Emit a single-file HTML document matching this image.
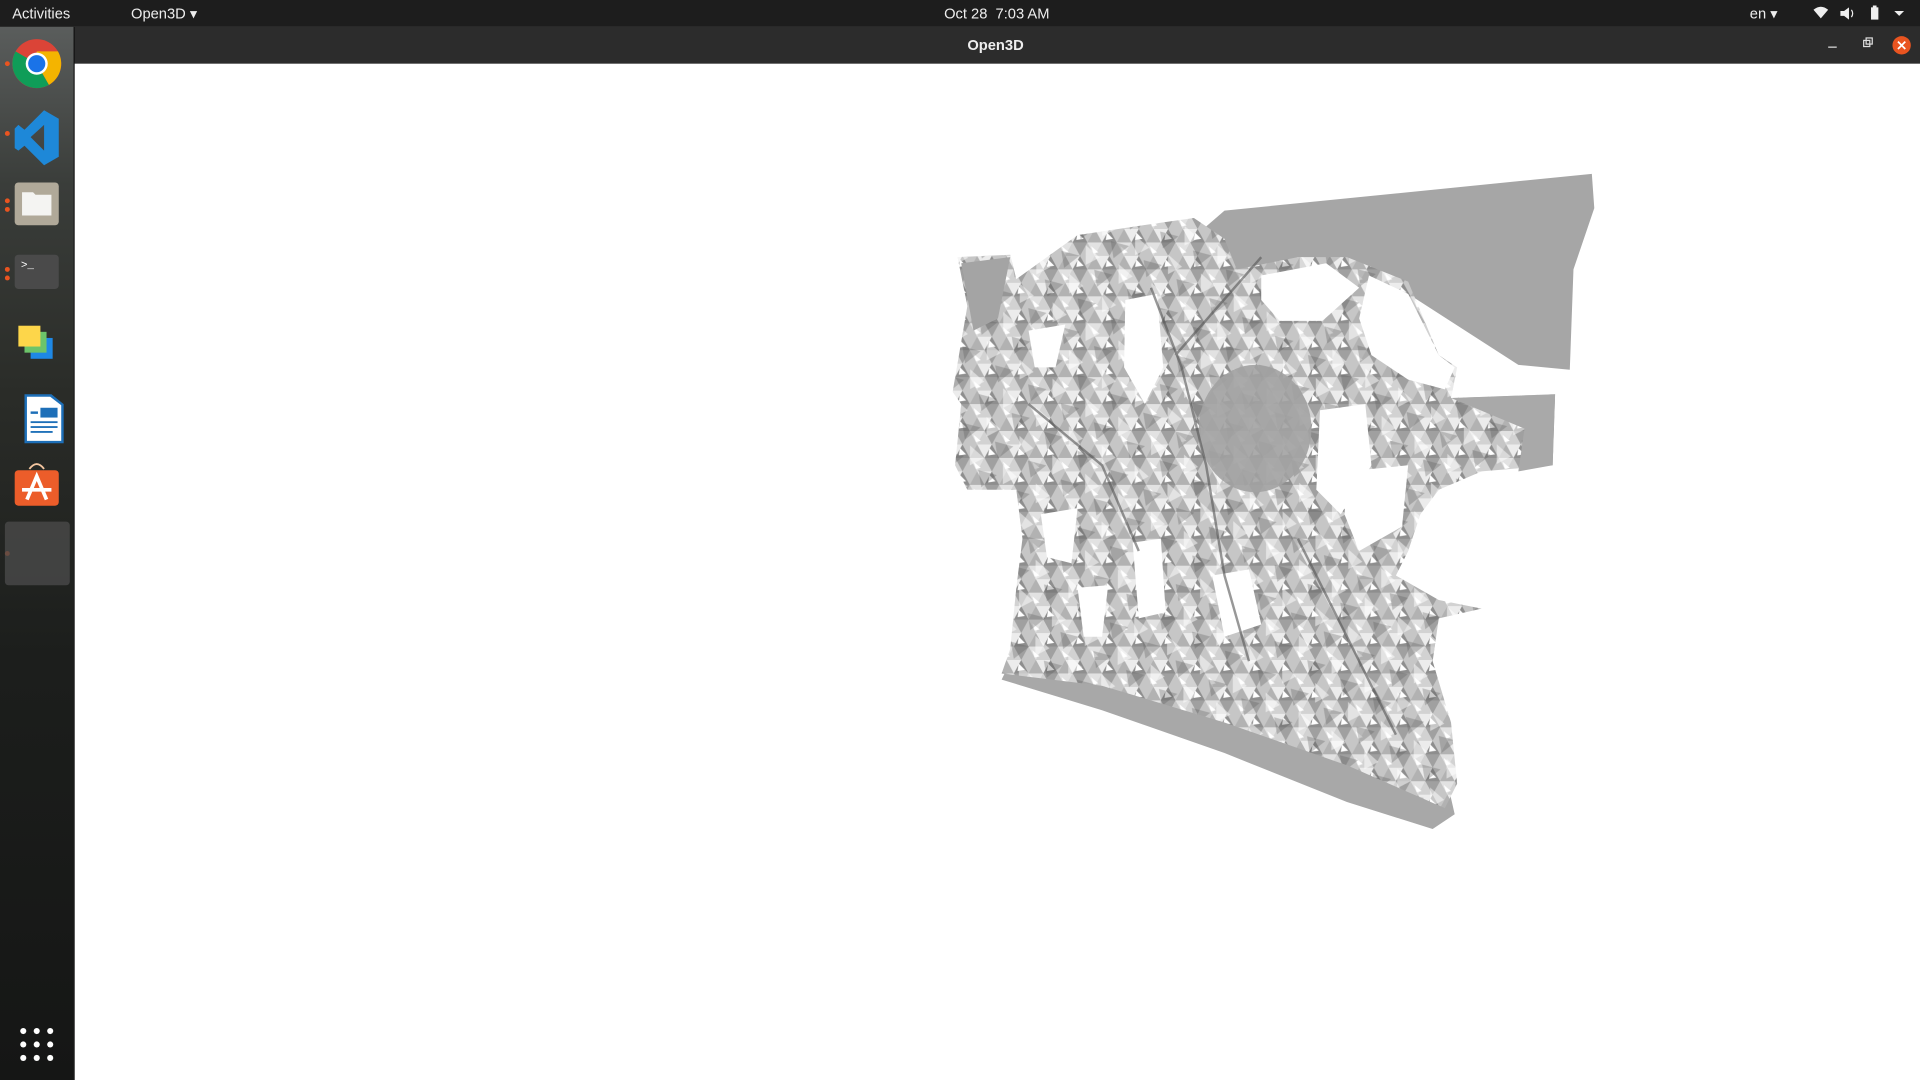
<!DOCTYPE html>
<html><head><meta charset="utf-8"><style>
html,body{margin:0;padding:0;width:1920px;height:1080px;overflow:hidden;background:#fff;}
#s{position:absolute;left:0;top:0;width:1568px;height:882px;transform:scale(1.22449);transform-origin:0 0;font-family:"Liberation Sans",sans-serif;}
.top{position:absolute;left:0;top:0;width:1568px;height:22px;background:#1d1d1d;color:#eee;font-size:12px;}
.top span{position:absolute;top:4px;}
.title{position:absolute;left:60px;top:22px;width:1508px;height:30px;background:#2c2c2c;color:#eee;font-size:12px;font-weight:bold;}
.dock{position:absolute;left:0;top:22px;width:60px;height:860px;background:linear-gradient(180deg,#5a5d5c 0%,#3a3d3a 15%,#2a2c28 35%,#1c1e1c 60%,#151615 100%);border-right:1px solid #111;}
.dot{position:absolute;width:4px;height:4px;border-radius:2px;background:#e95420;left:4px;}
</style></head><body><div id="s">
<div class="top"><span style="left:10px">Activities</span><span style="left:107px">Open3D ▾</span><span style="left:771px">Oct 28&nbsp; 7:03 AM</span><span style="left:1429px">en ▾</span>
<svg style="position:absolute;left:1480px;top:4px" width="80" height="14"><path d="M1 4 Q7 -1 13 4 L7 11Z" fill="#eee"/><path d="M23 5h3l4-3v10l-4-3h-3z" fill="#eee"/><path d="M32 4q2 3 0 6" stroke="#eee" fill="none"/><rect x="48" y="2" width="6" height="10" fill="#eee"/><rect x="49.5" y="0.5" width="3" height="2" fill="#eee"/><path d="M67 5h8l-4 4z" fill="#eee"/></svg></div>
<div class="title"><span style="position:absolute;left:730px;top:8px">Open3D</span>
<svg style="position:absolute;left:1420px;top:6px" width="90" height="18"><rect x="13" y="10" width="7" height="1" fill="#ddd"/><rect x="42" y="5" width="5" height="5" fill="none" stroke="#ddd"/><rect x="44" y="3" width="5" height="5" fill="none" stroke="#ddd"/><circle cx="73" cy="9" r="7.5" fill="#e95420"/><path d="M70 6l6 6M76 6l-6 6" stroke="#fff" stroke-width="1.4"/></svg></div>
<div class="dock">
<div class="dot" style="top:28px"></div><div class="dot" style="top:85px"></div><div class="dot" style="top:140px"></div><div class="dot" style="top:147px"></div><div class="dot" style="top:196px"></div><div class="dot" style="top:203px"></div><div class="dot" style="top:428px"></div>
<svg style="position:absolute;left:0;top:0" width="60" height="860">
<g transform="translate(30,30)"><circle r="20" fill="#db4437"/><path d="M0 0 L-17.3 -10 A20 20 0 0 0 10 17.3Z" fill="#0f9d58"/><path d="M0 0 L10 17.3 A20 20 0 0 0 17.3 -10 L0 -10Z" fill="#f4b400"/><circle r="9" fill="#fff"/><circle r="7" fill="#1a73e8"/></g>
<path d="M36 68 L48 75 V106 L36 113 L20 97 L15 101 L12 99 V83 L15 80 L20 84Z M36 80 L25 90 L36 101Z" fill="#1e88d8" fill-rule="evenodd"/>
<rect x="12" y="127" width="36" height="35" rx="3" fill="#b0a999"/><path d="M18 135h9l2 2h13v17h-24z" fill="#f4f4f2"/>
<rect x="12" y="186" width="36" height="28" rx="3" fill="#4a4a4a"/><text x="17" y="197" fill="#fff" font-size="9" font-family="Liberation Mono">&gt;_</text>
<rect x="25" y="254" width="18" height="17" fill="#1e88e5"/><rect x="20" y="249" width="18" height="17" fill="#6cc46a"/><rect x="15" y="244" width="18" height="17" fill="#fdd64a"/>
<path d="M20 300h22l10 8v32h-32z" fill="#1d6fb8"/><path d="M22 302h19l9 7v29h-28z" fill="#fff"/><rect x="25" y="314" width="6" height="2" fill="#1d6fb8"/><rect x="33" y="311" width="14" height="8" fill="#1d6fb8"/><rect x="25" y="322" width="22" height="1.5" fill="#1d6fb8"/><rect x="25" y="326" width="22" height="1.5" fill="#1d6fb8"/><rect x="25" y="330" width="18" height="1.5" fill="#1d6fb8"/>
<path d="M24 361q6 -8 12 0" stroke="#f4c6a0" fill="none" stroke-width="1.5"/><rect x="12" y="362" width="36" height="29" rx="3" fill="#ec5d2a"/><path d="M22 386l8 -19l8 19M18 378h24" stroke="#fff" stroke-width="3" fill="none"/>
<rect x="4" y="404" width="53" height="52" rx="3" fill="#4a4a4a" opacity="0.8"/>
<g fill="#fff"><circle cx="19" cy="820" r="2.5"/><circle cx="30" cy="820" r="2.5"/><circle cx="41" cy="820" r="2.5"/><circle cx="19" cy="831" r="2.5"/><circle cx="30" cy="831" r="2.5"/><circle cx="41" cy="831" r="2.5"/><circle cx="19" cy="842" r="2.5"/><circle cx="30" cy="842" r="2.5"/><circle cx="41" cy="842" r="2.5"/></g>
</svg></div>
<svg style="position:absolute;left:0;top:0" width="1568" height="882">
<defs><pattern id="m" width="24" height="22" patternUnits="userSpaceOnUse">
<rect width="24" height="22" fill="#c6c6c6"/><path d="M0 0L12 0L6 11Z" fill="#e2e2e2"/><path d="M12 0L24 0L18 11Z" fill="#a0a0a0"/><path d="M6 11L18 11L12 22Z" fill="#ececec"/><path d="M0 22L6 11L12 22Z" fill="#b2b2b2"/><path d="M12 0L18 11L6 11Z" fill="#d2d2d2"/><path d="M18 11L24 22L12 22Z" fill="#8e8e8e"/><path d="M3 3L9 8L5 9Z" fill="#fff"/><path d="M16 14L21 19L15 20Z" fill="#fff"/></pattern>
<pattern id="m2" width="31" height="27" patternUnits="userSpaceOnUse" patternTransform="rotate(30)">
<rect width="31" height="27" fill="none"/><path d="M0 0L15 3L8 14Z" fill="#fff" opacity=".5"/><path d="M16 14L31 10L25 25Z" fill="#555" opacity=".3"/></pattern></defs>
<path d="M985 185L1000 172L1300 142L1302 170L1285 220L1282 302L1240 298L1150 240L1060 210L1010 230Z" fill="#a6a6a6"/>
<path d="M818 555L900 580L1000 615L1100 655L1170 677L1188 665L1180 630L1100 605L1000 575L900 545L830 530Z" fill="#a8a8a8"/>
<path d="M782 210L825 208L830 228L880 192L940 183L975 178L1000 195L1010 220L1060 210L1100 210L1150 230L1175 290L1190 300L1185 325L1270 322L1268 380L1210 385L1175 400L1160 420L1150 450L1140 470L1175 490L1210 497L1175 505L1170 540L1185 590L1190 640L1180 660L1100 625L1000 590L900 560L818 550L825 530L830 480L835 440L830 400L790 400L780 380L785 330L778 320L790 250Z" fill="url(#m)"/>
<path d="M782 210L825 208L830 228L880 192L940 183L975 178L1000 195L1010 220L1060 210L1100 210L1150 230L1175 290L1190 300L1185 325L1270 322L1268 380L1210 385L1175 400L1160 420L1150 450L1140 470L1175 490L1210 497L1175 505L1170 540L1185 590L1190 640L1180 660L1100 625L1000 590L900 560L818 550L825 530L830 480L835 440L830 400L790 400L780 380L785 330L778 320L790 250Z" fill="url(#m2)"/>
<path d="M1185 325L1270 322L1268 380L1240 385L1245 350Z" fill="#a9a9a9"/>
<path d="M785 215L825 210L815 260L795 270Z" fill="#a4a4a4"/>
<ellipse cx="1025" cy="350" rx="46" ry="52" fill="#a2a2a2" opacity=".9"/>
<g fill="#fff">
<path d="M919 245L945 240L950 300L935 330L918 300Z"/>
<path d="M1118 225L1150 240L1175 290L1188 300L1180 318L1150 310L1120 290L1110 260Z"/>
<path d="M1030 225L1083 215L1110 235L1080 262L1045 262L1030 245Z"/>
<path d="M1078 335L1115 330L1120 380L1095 420L1075 400Z"/>
<path d="M925 443L948 440L952 500L930 505Z"/>
<path d="M1100 385L1150 380L1145 430L1110 450L1098 420Z"/>
<path d="M990 470L1020 465L1030 510L1000 520Z"/>
<path d="M840 270L870 265L862 300L845 300Z"/>
<path d="M850 420L880 415L875 460L855 455Z"/>
<path d="M880 480L905 478L900 520L885 520Z"/>
</g>
<g stroke="#555" stroke-width="2" fill="none" opacity=".6"><path d="M940 235L965 300L985 380L1000 470L1020 540"/><path d="M960 290L1030 210"/><path d="M1060 440L1100 520L1140 600"/><path d="M840 330L900 380L930 450"/></g>
</svg>
</div></body></html>
